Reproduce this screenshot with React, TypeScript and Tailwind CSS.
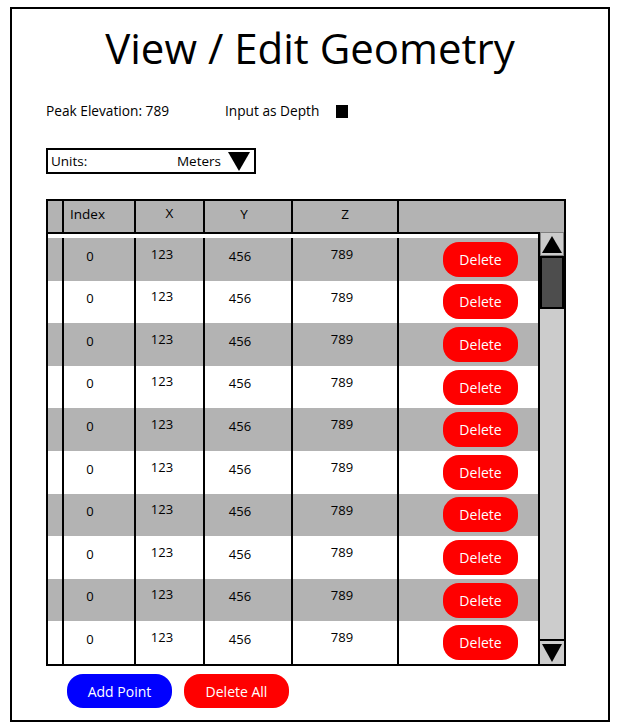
import React from "react";

const rows = [0, 1, 2, 3, 4, 5, 6, 7, 8, 9];

export default function App() {
  return (
    <div className="bg-white w-[619px] h-[723px] pt-[7px] pl-[10px]" style={{ fontFamily: '"Open Sans", sans-serif' }}>
      <div className="w-[600px] h-[715px] border-2 border-black flex flex-col pl-[34px]">
        <h1 className="text-[42px] leading-none text-center text-black mt-[18px] mr-[34px]">
          View / Edit Geometry
        </h1>

        <div className="flex items-center mt-[34px] h-[16px] text-[13.7px] text-black">
          <span className="w-[179px]">Peak Elevation: 789</span>
          <span>Input as Depth</span>
          <span className="ml-[17px] w-[12px] h-[13px] bg-black" />
        </div>

        <div className="mt-[29px] w-[210px] h-[26px] border-2 border-black flex items-center pl-[3px] pr-[4px] text-[13.5px]">
          <span className="flex-1">Units:</span>
          <span className="mr-[7px]">Meters</span>
          <svg width="22" height="19" viewBox="0 0 22 19">
            <polygon points="0,0 22,0 11,19" fill="black" />
          </svg>
        </div>

        <div className="mt-[25px] w-[520px] h-[467px] border-2 border-black flex flex-col text-[13px] text-black">
          {/* header */}
          <div className="flex h-[33px] bg-[#b3b3b3] border-b-2 border-black text-[13.5px]">
            <div className="w-[14px]" />
            <div className="w-[72px] border-l-2 border-black flex items-center pl-[6px] pb-[4px]">Index</div>
            <div className="w-[69px] border-l-2 border-black flex items-center justify-center pb-[6px]">X</div>
            <div className="w-[88px] border-l-2 border-black flex items-center justify-center pb-[4px] pr-[8px]">Y</div>
            <div className="w-[106px] border-l-2 border-black flex items-center justify-center pb-[4px]">Z</div>
            <div className="flex-1 border-l-2 border-black" />
          </div>

          {/* body */}
          <div className="flex flex-1 min-h-0">
            <div className="flex-1 flex flex-col pt-[4px]">
              {rows.map((r) => (
                <div key={r} className={`flex h-[42.7px] ${r % 2 === 0 ? "bg-[#b3b3b3]" : "bg-white"}`}>
                  <div className="w-[14px]" />
                  <div className="w-[72px] border-l-2 border-black flex items-center justify-center pr-[18px] pb-[6px]">0</div>
                  <div className="w-[69px] border-l-2 border-black flex items-center justify-center pr-[15px] pb-[10px]">123</div>
                  <div className="w-[88px] border-l-2 border-black flex items-center justify-center pr-[16px] pb-[6px]">456</div>
                  <div className="w-[106px] border-l-2 border-black flex items-center justify-center pr-[6px] pb-[9px]">789</div>
                  <div className="flex-1 border-l-2 border-black flex items-center justify-end pr-[20px]">
                    <button className="w-[75px] h-[35px] rounded-[16px] bg-[#ff0000] text-white text-[14px]">Delete</button>
                  </div>
                </div>
              ))}
            </div>

            {/* scrollbar */}
            <div className="w-[26px] -mt-[2px] border-l-2 border-black bg-[#cccccc] flex flex-col">
              <div className="h-[24px] border border-[#808080] flex items-center justify-center">
                <svg width="20" height="17" viewBox="0 0 20 17">
                  <polygon points="10,0 20,17 0,17" fill="black" />
                </svg>
              </div>
              <div className="h-[53px] bg-[#4d4d4d] border-2 border-black" />
              <div className="flex-1" />
              <div className="h-[25px] border-t-2 border-black flex items-center justify-center">
                <svg width="20" height="18" viewBox="0 0 20 18">
                  <polygon points="0,0 20,0 10,18" fill="black" />
                </svg>
              </div>
            </div>
          </div>
        </div>

        <div className="flex gap-[12px] mt-[8px] ml-[21px] text-[14px]">
          <button className="w-[105px] h-[34px] rounded-[16px] bg-[#0000ff] text-white">Add Point</button>
          <button className="w-[105px] h-[34px] rounded-[16px] bg-[#ff0000] text-white">Delete All</button>
        </div>
      </div>
    </div>
  );
}
